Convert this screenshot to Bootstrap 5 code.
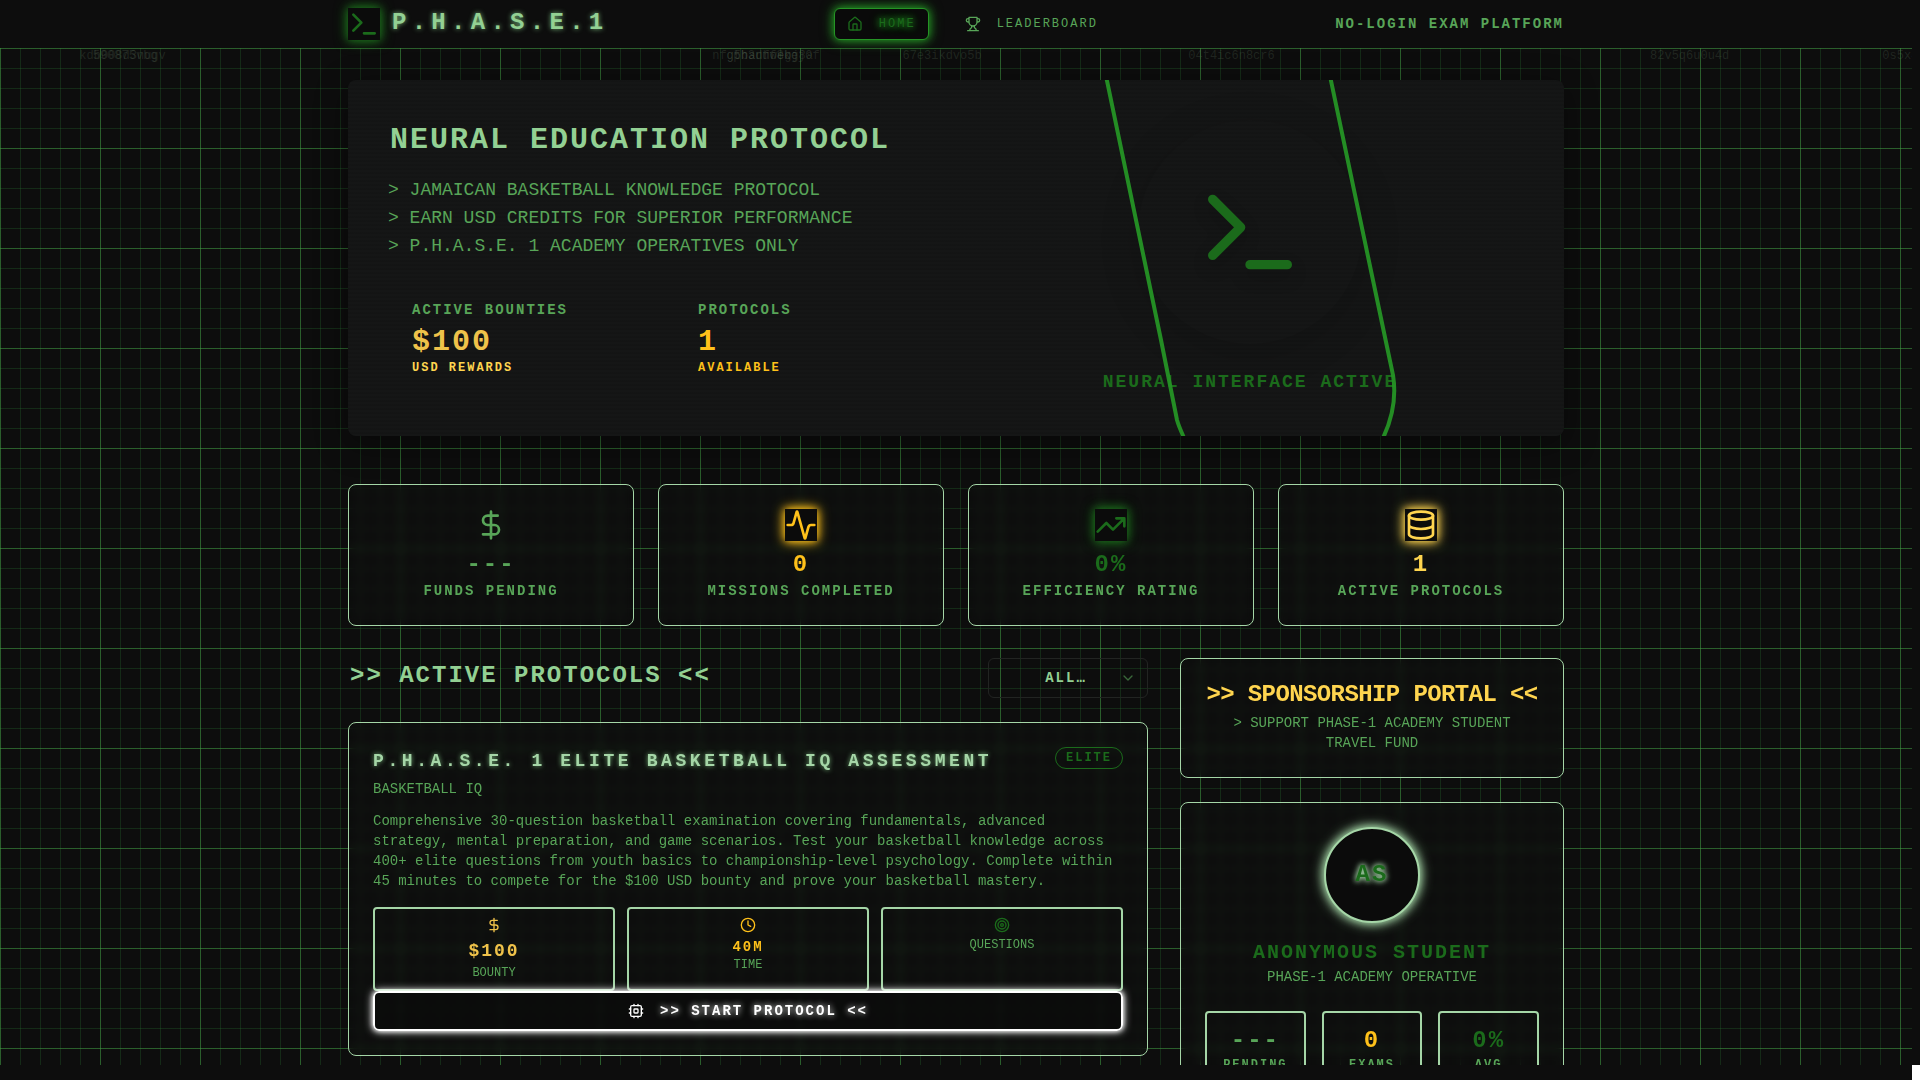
<!DOCTYPE html>
<html lang="en">
<head>
<meta charset="utf-8">
<meta name="viewport" content="width=device-width, initial-scale=1">
<title>P.H.A.S.E. 1</title>
<link rel="stylesheet" href="https://cdn.jsdelivr.net/npm/bootstrap@5.3.0/dist/css/bootstrap.min.css">
<style>
:root{
  --ink:#0d0d0d; --panel:#151616; --mint:#a5d6a7; --soft:#93d093; --leaf:#58a558;
  --deep:#1b6b1b; --line:#259425; --amber:#ffc11a; --gold:#efc24a; --sun:#ffd54f;
}
body{background:var(--ink);color:var(--leaf);font-family:"Liberation Mono","Courier New",monospace;font-size:14px;line-height:20px}
h1,h2,h3,p{margin:0;line-height:inherit}
svg.ico{fill:none;stroke:currentColor;stroke-width:2;stroke-linecap:round;stroke-linejoin:round;display:block;width:16px;height:16px;flex:none}
svg.ico-lg{width:32px;height:32px}

/* window frame: page plus the scrollbar gutters */
.shell{display:grid;grid-template:minmax(0,1fr) 15px / minmax(0,1fr) 8px;height:100vh;overflow:hidden}
.screen{display:flex;flex-direction:column;overflow:hidden;min-width:0}
.corner{grid-area:2/2;background:#fff}

.topbar{height:48px;flex:none;background:var(--ink);position:relative;z-index:2}
.wrap{width:100%;max-width:1280px;margin:0 auto;padding:0 32px}
.gridfield{flex:1;min-height:0;position:relative;padding:32px 0 0;background-color:var(--ink);
  background-image:
   linear-gradient(rgba(70,160,70,.44) 1px,transparent 1px),
   linear-gradient(90deg,rgba(70,160,70,.44) 1px,transparent 1px),
   linear-gradient(rgba(45,135,55,.24) 1px,transparent 1px),
   linear-gradient(90deg,rgba(45,135,55,.24) 1px,transparent 1px);
  background-size:100px 100px,100px 100px,20px 20px,20px 20px}

.c-mint{color:var(--mint)} .c-soft{color:var(--soft)} .c-deep{color:var(--deep)}
.c-amber{color:var(--amber)} .c-gold{color:var(--gold)} .c-sun{color:var(--sun)}
.trk{letter-spacing:2px}
.t12{font-size:12px;line-height:16px} .t14{font-size:14px;line-height:20px} .t18{font-size:18px;line-height:28px}
.t20{font-size:20px;line-height:28px} .t24{font-size:24px;line-height:32px} .t30{font-size:30px;line-height:36px}
.wide-trk{letter-spacing:.2em}
.glow-text{text-shadow:0 0 5px rgba(129,199,132,.9)}
.glow-box{background:#0b0b0b;box-shadow:0 0 8px currentColor,0 0 14px currentColor}

.brand{gap:12px;font-size:24px;letter-spacing:.22em;text-decoration:none;line-height:32px}
.brand-name{padding-bottom:2px}
.pill{height:32px;padding:0 12px;gap:16px;font-size:12px;color:var(--leaf);text-decoration:none;border-radius:6px}
.pill:hover{color:var(--mint)}
.pill.on{border:1px solid var(--line);color:var(--deep);background:#0a0a0a;box-shadow:0 0 8px var(--line),0 0 14px rgba(34,150,34,.7)}
.pill.on span{text-shadow:0 0 6px #1f9a1f,0 0 10px #1f9a1f}

.rain span{position:absolute;top:0;font-size:12px;line-height:16px;color:rgba(90,110,90,.26);white-space:pre}
.rain{position:absolute;inset:0;overflow:hidden;pointer-events:none}
.rain span:nth-child(1){left:4.15%} .rain span:nth-child(2){left:4.85%} .rain span:nth-child(3){left:37.25%}
.rain span:nth-child(4){left:38%} .rain span:nth-child(5){left:38.35%} .rain span:nth-child(6){left:47.2%}
.rain span:nth-child(7){left:62.15%} .rain span:nth-child(8){left:86.3%} .rain span:nth-child(9){left:98.45%}

.hero{position:relative;overflow:hidden;border-radius:8px;padding:40px;display:grid;grid-template-columns:1fr 1fr;gap:40px;
  background:repeating-linear-gradient(rgba(0,0,0,.08) 0 2px,transparent 2px 4px),var(--panel);
  box-shadow:0 8px 32px rgba(0,0,0,.4)}
.hero-title{padding:2px 0 0 2px}
.hero-lines{margin-top:18px}
.hero-stats{margin-top:16px;display:grid;grid-template-columns:1fr 1fr;gap:24px}
.hero-stats>div{padding:24px 24px 0}
.visual{position:relative;text-align:center}
.disc{width:224px;height:224px;border-radius:50%;margin:0 auto 24px;display:flex;align-items:center;justify-content:center;
  box-shadow:0 8px 40px rgba(0,0,0,.16)}
svg.ico-xl{width:112px;height:112px;filter:drop-shadow(0 8px 8px rgba(0,0,0,.2))}
.orbit{position:absolute;top:-40px;left:50%;width:400px;height:calc(100% + 80px);transform:translateX(-50%);
  fill:none;stroke:var(--line);stroke-width:4;opacity:.95}

.frame{border:1px solid var(--mint);border-radius:8px;padding:24px;background:rgba(14,14,14,.35);backdrop-filter:blur(4px)}
.stat-row{display:grid;grid-template-columns:repeat(4,1fr);gap:24px;margin-top:48px}
.columns{display:grid;grid-template-columns:minmax(0,1fr) calc((100% - 64px)/3);gap:32px;margin-top:32px}
.side{display:flex;flex-direction:column;gap:24px}
.section-title{padding:2px 2px 0}

.filter{width:100%;height:40px;border:1px solid #222422;border-radius:6px;background-color:transparent;color:var(--soft);
  font:bold 14px/20px "Liberation Mono","Courier New",monospace;letter-spacing:2px;text-align-last:center;padding:0 16px 0 12px;
  appearance:none}
.filter-box{position:relative;width:160px}
.filter-box svg{position:absolute;right:12px;top:12px;opacity:.6;pointer-events:none}
.tier{border:1px solid var(--deep);border-radius:11px;padding:0 10px;line-height:20px;font-size:12px}
.cells{display:grid;grid-template-columns:repeat(3,1fr);gap:12px}
.cell-box{border:2px solid var(--mint);border-radius:4px;padding:8px;text-align:center}
.cells.roomy{gap:16px} .cells.roomy .cell-box{padding:12px 0}
.launch{width:100%;height:40px;border:2px solid #fff;border-radius:6px;background:rgba(10,10,10,.5);color:#fff;gap:16px;position:relative;
  display:flex;align-items:center;justify-content:center;box-shadow:0 0 5px #fff,0 0 10px #fff}
.launch span{text-shadow:0 0 6px #fff}
.avatar-ring{width:96px;height:96px;border-radius:50%;border:2px solid var(--mint);background:#0b0b0b;box-shadow:0 0 8px var(--mint),0 0 14px var(--mint);
  display:flex;align-items:center;justify-content:center;margin:0 auto 16px;text-shadow:0 0 5px var(--mint),0 0 7px var(--mint)}
.tight{font-size:24px;letter-spacing:-.025em;line-height:24px;white-space:nowrap;margin-bottom:6px}
</style>
</head>
<body>
<div class="shell">
<div class="screen">
  <header class="topbar">
    <div class="wrap h-100 d-flex align-items-center justify-content-between">
      <a href="#" class="brand d-flex align-items-center fw-bold c-soft">
        <span class="glow-box c-deep"><svg class="ico ico-lg" viewBox="0 0 24 24"><path d="m4 17 6-6-6-6M12 19h8"/></svg></span>
        <span class="glow-text brand-name">P.H.A.S.E.1</span>
      </a>
      <nav class="d-flex trk gap-4">
        <a href="#" class="pill on d-flex align-items-center"><svg class="ico" viewBox="0 0 24 24"><path d="M15 21v-8a1 1 0 0 0-1-1h-4a1 1 0 0 0-1 1v8"/><path d="M3 10a2 2 0 0 1 .709-1.528l7-5.999a2 2 0 0 1 2.582 0l7 5.999A2 2 0 0 1 21 10v9a2 2 0 0 1-2 2H5a2 2 0 0 1-2-2z"/></svg><span>HOME</span></a>
        <a href="#" class="pill d-flex align-items-center"><svg class="ico" viewBox="0 0 24 24"><path d="M6 9H4.500a2.500 2.500 0 0 1 0-5H6M18 9h1.500a2.500 2.500 0 0 0 0-5H18M4 22h16M10 14.660V17c0 .550-.470.980-.970 1.210C7.850 18.750 7 20.240 7 22M14 14.660V17c0 .550.470.980.970 1.210C16.150 18.750 17 20.240 17 22M18 2H6v7a6 6 0 0 0 12 0V2Z"/></svg><span>LEADERBOARD</span></a>
      </nav>
      <div class="fw-bold trk">NO-LOGIN EXAM PLATFORM</div>
    </div>
  </header>

  <main class="gridfield">
    <div class="rain" aria-hidden="true"><span>kdb008d3nugv</span><span>590875vbg</span><span>nfg5hauhwegj</span><span>gtbadfoebg8a</span><span>ph3ruf8kej0f</span><span>67e3ikdvo5b</span><span>04t4ic6n8cr6</span><span>82v5q6u0u4d</span><span>0s5x4k2m</span></div>
    <div class="wrap position-relative">

      <section class="hero">
        <div>
          <h1 class="hero-title t30 fw-bold trk c-soft">NEURAL EDUCATION PROTOCOL</h1>
          <div class="hero-lines t18">
            <p>&gt; JAMAICAN BASKETBALL KNOWLEDGE PROTOCOL</p>
            <p>&gt; EARN USD CREDITS FOR SUPERIOR PERFORMANCE</p>
            <p>&gt; P.H.A.S.E. 1 ACADEMY OPERATIVES ONLY</p>
          </div>
          <div class="hero-stats trk fw-bold">
            <div><div class="t14 mb-1">ACTIVE BOUNTIES</div><div class="t30 c-gold">$100</div><div class="t12 c-sun">USD REWARDS</div></div>
            <div><div class="t14 mb-1">PROTOCOLS</div><div class="t30 c-amber">1</div><div class="t12 c-amber">AVAILABLE</div></div>
          </div>
        </div>
        <div class="visual">
          <div class="disc"><svg class="ico ico-xl c-deep" viewBox="0 0 24 24"><path d="m4 17 6-6-6-6M12 19h8"/></svg></div>
          <div class="t18 fw-bold trk c-deep">NEURAL INTERFACE ACTIVE</div>
          <svg class="orbit" viewBox="0 0 400 356"><path d="M56-4 111 260 127 340Q129 347 135 360M280-4 336 262 343 295C347 320 342 340 332 360"/></svg>
        </div>
      </section>

      <section class="stat-row fw-bold trk text-center">
        <div class="frame"><svg class="ico ico-lg mx-auto mb-2" viewBox="0 0 24 24"><path d="M12 2v20M17 5H9.500a3.500 3.500 0 0 0 0 7h5a3.500 3.500 0 0 1 0 7H6"/></svg><div class="t24">---</div><div>FUNDS PENDING</div></div>
        <div class="frame"><svg class="ico ico-lg mx-auto mb-2 glow-box c-amber" viewBox="0 0 24 24"><path d="M22 12h-2.480a2 2 0 0 0-1.930 1.460l-2.350 8.360a.25.25 0 0 1-.48 0L9.240 2.180a.25.25 0 0 0-.48 0l-2.350 8.360A2 2 0 0 1 4.490 12H2"/></svg><div class="t24 c-amber">0</div><div>MISSIONS COMPLETED</div></div>
        <div class="frame"><svg class="ico ico-lg mx-auto mb-2 glow-box c-deep" viewBox="0 0 24 24"><path d="m22 7-8.500 8.500-5-5L2 17M16 7h6v6"/></svg><div class="t24 c-deep">0%</div><div>EFFICIENCY RATING</div></div>
        <div class="frame"><svg class="ico ico-lg mx-auto mb-2 glow-box c-sun" viewBox="0 0 24 24"><ellipse cx="12" cy="5" rx="9" ry="3"/><path d="M3 5v14a9 3 0 0 0 18 0V5M3 12a9 3 0 0 0 18 0"/></svg><div class="t24 c-sun">1</div><div>ACTIVE PROTOCOLS</div></div>
      </section>

      <div class="columns">
        <section>
          <div class="d-flex justify-content-between align-items-start mb-4">
            <h2 class="section-title fw-bold trk c-soft t24">&gt;&gt; ACTIVE PROTOCOLS &lt;&lt;</h2>
            <div class="filter-box">
              <select class="filter" aria-label="Filter protocols"><option>ALL…</option></select>
              <svg class="ico" viewBox="0 0 24 24"><path d="m6 9 6 6 6-6"/></svg>
            </div>
          </div>
          <article class="frame">
            <div class="d-flex justify-content-between align-items-start">
              <div>
                <h3 class="t18 fw-bold wide-trk c-mint glow-text mb-1">P.H.A.S.E. 1 ELITE BASKETBALL IQ ASSESSMENT</h3>
                <p>BASKETBALL IQ</p>
              </div>
              <span class="tier fw-bold trk c-deep">ELITE</span>
            </div>
            <p class="mt-2 pt-1 mb-3">Comprehensive 30-question basketball examination covering fundamentals, advanced strategy, mental preparation, and game scenarios. Test your basketball knowledge across 400+ elite questions from youth basics to championship-level psychology. Complete within 45 minutes to compete for the $100 USD bounty and prove your basketball mastery.</p>
            <div class="cells">
              <div class="cell-box"><svg class="ico mx-auto mb-1 c-gold" viewBox="0 0 24 24"><path d="M12 2v20M17 5H9.500a3.500 3.500 0 0 0 0 7h5a3.500 3.500 0 0 1 0 7H6"/></svg><div class="t18 fw-bold trk c-gold">$100</div><div class="t12">BOUNTY</div></div>
              <div class="cell-box"><svg class="ico mx-auto mb-1 c-amber" viewBox="0 0 24 24"><circle cx="12" cy="12" r="10"/><path d="M12 6v6l4 2"/></svg><div class="t14 fw-bold trk c-amber">40M</div><div class="t12">TIME</div></div>
              <div class="cell-box"><svg class="ico mx-auto mb-1 c-deep" viewBox="0 0 24 24"><circle cx="12" cy="12" r="10"/><circle cx="12" cy="12" r="6"/><circle cx="12" cy="12" r="2"/></svg><div class="t12">QUESTIONS</div></div>
            </div>
            <button type="button" class="launch fw-bold trk"><svg class="ico" viewBox="0 0 24 24"><rect x="4" y="4" width="16" height="16" rx="2"/><rect x="9" y="9" width="6" height="6" rx="1"/><path d="M15 2v2M15 20v2M2 15h2M2 9h2M20 15h2M20 9h2M9 2v2M9 20v2"/></svg><span>&gt;&gt; START PROTOCOL &lt;&lt;</span></button>
          </article>
        </section>

        <aside class="side text-center">
          <section class="frame">
            <h2 class="fw-bold tight c-sun">&gt;&gt; SPONSORSHIP PORTAL &lt;&lt;</h2>
            <p>&gt; SUPPORT PHASE-1 ACADEMY STUDENT TRAVEL FUND</p>
          </section>
          <section class="frame">
            <div class="avatar-ring t24 fw-bold trk c-deep">AS</div>
            <h3 class="t20 fw-bold trk c-deep">ANONYMOUS STUDENT</h3>
            <p class="mb-4">PHASE-1 ACADEMY OPERATIVE</p>
            <div class="cells roomy fw-bold trk">
              <div class="cell-box"><div class="t24">---</div><div class="t12">PENDING</div></div>
              <div class="cell-box"><div class="t24 c-amber">0</div><div class="t12">EXAMS</div></div>
              <div class="cell-box"><div class="t24 c-deep">0%</div><div class="t12">AVG</div></div>
            </div>
          </section>
        </aside>
      </div>
    </div>
  </main>
</div>
<div class="corner"></div>
</div>
<script src="https://cdn.jsdelivr.net/npm/bootstrap@5.3.0/dist/js/bootstrap.bundle.min.js"></script>
</body>
</html>
